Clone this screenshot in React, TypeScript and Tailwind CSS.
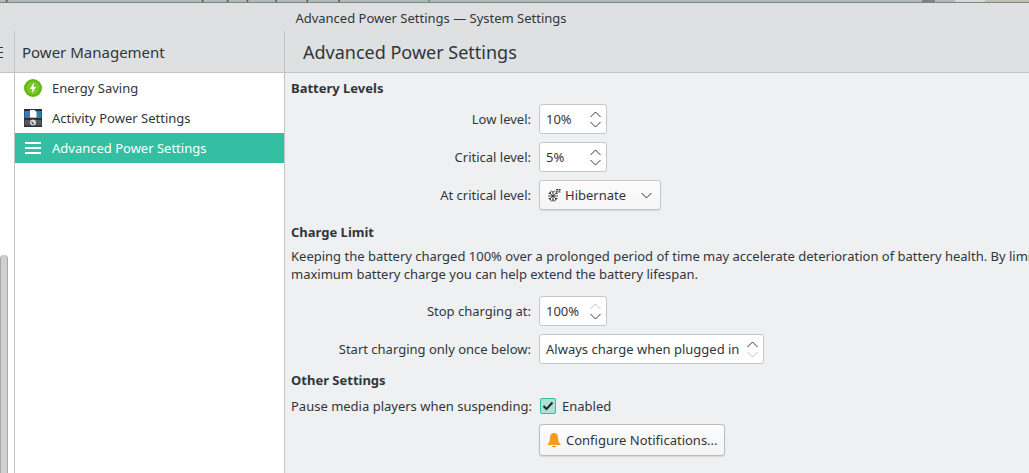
// App.tsx
import React from "react";

const Chevron = ({ dir, faded }: { dir: "up" | "down"; faded?: boolean }) => (
  <svg width="11" height="7" viewBox="0 0 11 7" className={faded ? "opacity-30" : ""}>
    <path
      d={dir === "up" ? "M0.5 6 L5.5 1 L10.5 6" : "M0.5 1 L5.5 6 L10.5 1"}
      fill="none"
      stroke="#31363b"
      strokeWidth="1"
    />
  </svg>
);

const Arrows = ({ upFaded, downFaded }: { upFaded?: boolean; downFaded?: boolean }) => (
  <div className="flex flex-col gap-[3px]">
    <Chevron dir="up" faded={upFaded} />
    <Chevron dir="down" faded={downFaded} />
  </div>
);

const Spin = ({ value, upFaded }: { value: string; upFaded?: boolean }) => (
  <div className="flex h-[30px] w-[68px] items-center justify-between rounded-[3px] border border-[#c4c6c8] bg-white pl-[6px] pr-[5px]">
    <span>{value}</span>
    <Arrows upFaded={upFaded} />
  </div>
);

const Row = ({ label, children, className }: { label: string; children: React.ReactNode; className?: string }) => (
  <div className={`grid grid-cols-[240px_1fr] items-center gap-x-2 ${className ?? ""}`}>
    <span className="text-right whitespace-nowrap">{label}</span>
    <div className="flex">{children}</div>
  </div>
);

const BoltIcon = () => (
  <svg width="18" height="18" viewBox="0 0 18 18">
    <circle cx="9" cy="9" r="9" fill="#62b811" />
    <circle cx="9" cy="9" r="6.5" fill="#79c82a" />
    <path d="M10 3.5 L6 10 H8.5 L8 14.5 L12 8 H9.5 Z" fill="#ffffff" />
  </svg>
);

const ActivityIcon = () => (
  <svg width="18" height="18" viewBox="0 0 18 18">
    <rect width="18" height="18" fill="#2b3036" />
    <rect x="0.5" y="2" width="17" height="7" fill="#2f7fb0" />
    <rect x="0.5" y="11" width="17" height="5.5" fill="#555759" />
    <path d="M6 1 H10.5 L12.5 3 V8.5 H6 Z" fill="#ffffff" />
    <circle cx="9" cy="13.5" r="3" fill="#d5d8da" />
    <path d="M7 12.5 L9 13 L10 15 L8.5 15.5 Z" fill="#555759" />
  </svg>
);

const MenuIcon = () => (
  <svg width="16" height="12" viewBox="0 0 16 12">
    <path d="M0 1 H16 M0 6 H16 M0 11 H16" stroke="#ffffff" strokeWidth="2" />
  </svg>
);

const SnowIcon = () => (
  <svg width="13" height="13" viewBox="0 0 13 13">
    <path
      d="M1 3.5 L9 10.5 M9 3.5 L1 10.5 M5 2 V12.5 M0 7 H10 M3 1.5 L5 3.5 L7 1.5 M3 12.5 L5 10.5 L7 12.5 M0.5 4.5 H2.5 V2.5 M9.5 4.5 H7.5 M0.5 9.5 H2.5 V11.5 M9.5 9.5 H7.5 V11.5 M8 0.5 H10 L8 3 H10 M10.5 0.5 H12.5 L10.5 3 H12.5"
      fill="none"
      stroke="#31363b"
      strokeWidth="0.9"
    />
  </svg>
);

const BellIcon = () => (
  <svg width="16" height="16" viewBox="0 0 16 16">
    <path d="M8 1 C5 1 4 3.5 4 6 C4 9 3 11 1 13 H15 C13 11 12 9 12 6 C12 3.5 11 1 8 1 Z" fill="#f39c1f" />
    <path d="M6 14 H10 C10 15.5 6 15.5 6 14 Z" fill="#c9791a" />
  </svg>
);

const NavItem = ({ icon, label, active }: { icon: React.ReactNode; label: string; active?: boolean }) => (
  <div className={`flex h-[30px] items-center ${active ? "bg-[#34bfa3] text-white" : ""}`}>
    <div className="flex w-[37px] shrink-0 justify-center pr-[1px]">{icon}</div>
    <span className="whitespace-nowrap">{label}</span>
  </div>
);

export default function App() {
  return (
    <div
      className="flex h-screen w-full flex-col overflow-hidden bg-[#dee0e2] text-[13px] leading-[18px] text-[#31363b]"
      style={{ fontFamily: '"Noto Sans", sans-serif' }}
    >
      {/* bit of the window behind */}
      <div className="relative flex h-[3px] shrink-0 overflow-hidden border-b border-[#7f8484] bg-[#b2bab6]">
        <div className="mt-[-14px] w-[955px] shrink-0 text-[14px] whitespace-nowrap text-[#3f4846]">
          g with too. notifications which people, it up to your posts? <span className="text-[#2f8a6b]">Cookie, Notifications</span>
        </div>
        <div className="absolute top-0 left-[922px] h-[2px] w-[13px] bg-[#7c8280]" />
        <div className="w-[30px] shrink-0 bg-[#d8d8d6]" />
        <div className="flex-1 bg-[#c0c0b0]" />
      </div>

      {/* title bar */}
      <div className="flex h-[28px] shrink-0 items-center justify-center pt-[1px] pr-[167px]">
        Advanced Power Settings — System Settings
      </div>

      <div className="grid min-h-0 flex-1 grid-cols-[15px_270px_1fr] grid-rows-[42px_1fr]">
        {/* header row */}
        <div className="relative overflow-hidden border-r border-b border-[#c2c4c6]">
          <div className="absolute top-[16px] left-[-14px] flex h-[11px] w-[17px] flex-col justify-between">
            <div className="h-px bg-[#31363b]" />
            <div className="h-px bg-[#31363b]" />
            <div className="h-px bg-[#31363b]" />
          </div>
        </div>
        <div className="flex items-center border-r border-b border-[#c2c4c6] pl-[7px] text-[15px]">
          Power Management
        </div>
        <div className="flex items-center border-b border-[#c2c4c6] pl-[18px] text-[18px]">
          Advanced Power Settings
        </div>

        {/* left strip with scrollbar */}
        <div className="flex flex-col justify-end border-r border-[#c2c4c6] bg-white">
          <div className="h-[218px] w-[8px] rounded-t-[4px] border-x border-[#a8aaaa] bg-[#cdd0cf]" />
        </div>

        {/* sidebar */}
        <div className="border-r border-[#c2c4c6] bg-white">
          <NavItem icon={<BoltIcon />} label="Energy Saving" />
          <NavItem icon={<ActivityIcon />} label="Activity Power Settings" />
          <NavItem icon={<MenuIcon />} label="Advanced Power Settings" active />
        </div>

        {/* content */}
        <div className="overflow-hidden bg-[#eff0f1] pl-[6px]">
          <div className="mt-[6px] font-bold">Battery Levels</div>

          <Row label="Low level:" className="mt-[7px]">
            <Spin value="10%" />
          </Row>
          <Row label="Critical level:" className="mt-[8px]">
            <Spin value="5%" />
          </Row>
          <Row label="At critical level:" className="mt-[8px]">
            <div className="flex h-[30px] w-[122px] items-center justify-between rounded-[3px] border border-[#c4c6c8] bg-gradient-to-b from-[#fcfcfc] to-[#f5f5f5] pl-[8px] pr-[8px] shadow-[0_1px_1px_rgba(0,0,0,0.1)]">
              <div className="flex items-center gap-[4px]">
                <SnowIcon />
                <span>Hibernate</span>
              </div>
              <Chevron dir="down" />
            </div>
          </Row>

          <div className="mt-[13px] font-bold">Charge Limit</div>
          <div className="mt-[6px] whitespace-nowrap">
            Keeping the battery charged 100% over a prolonged period of time may accelerate deterioration of battery health. By limiting the
          </div>
          <div className="whitespace-nowrap">maximum battery charge you can help extend the battery lifespan.</div>

          <Row label="Stop charging at:" className="mt-[13px]">
            <Spin value="100%" upFaded />
          </Row>
          <Row label="Start charging only once below:" className="mt-[8px]">
            <div className="flex h-[30px] w-[225px] items-center justify-between rounded-[3px] border border-[#c4c6c8] bg-white pl-[6px] pr-[5px]">
              <span className="whitespace-nowrap">Always charge when plugged in</span>
              <Arrows downFaded />
            </div>
          </Row>

          <div className="mt-[7px] font-bold">Other Settings</div>
          <Row label="Pause media players when suspending:" className="mt-[8px]">
            <div className="flex items-center gap-[6px] pl-[1px]">
              <div className="flex h-[16px] w-[16px] items-center justify-center rounded-[2px] border border-[#34bfa3] bg-[#a9e2d6]">
                <svg width="12" height="10" viewBox="0 0 12 10">
                  <path d="M1.5 5 L4.5 8 L10.5 1.5" fill="none" stroke="#232629" strokeWidth="2" />
                </svg>
              </div>
              <span>Enabled</span>
            </div>
          </Row>
          <div className="mt-[9px] ml-[248px] flex">
            <div className="flex h-[32px] w-[186px] items-center gap-[4px] rounded-[3px] border border-[#b9bbbd] bg-gradient-to-b from-[#fcfcfc] to-[#f5f5f5] pl-[6px] shadow-[0_1px_1px_rgba(0,0,0,0.1)]">
              <BellIcon />
              <span className="whitespace-nowrap">Configure Notifications...</span>
            </div>
          </div>
        </div>
      </div>
    </div>
  );
}
